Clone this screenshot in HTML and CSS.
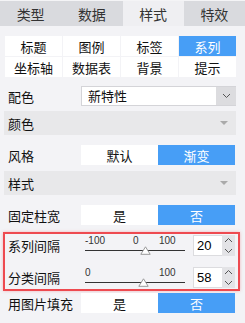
FILE: index.html
```html
<!DOCTYPE html>
<html lang="zh-CN">
<head>
    <meta charset="UTF-8">
    <title>系列样式</title>
    <link rel="stylesheet" href="styles.css">
</head>
<body>
    <div class="tabs">
        <div class="tab">类型</div>
        <div class="tab">数据</div>
        <div class="tab active">样式</div>
        <div class="tab">特效</div>
    </div>

    <div class="panel">
        <div class="sub-tabs">
            <div class="sub">标题</div>
            <div class="sub">图例</div>
            <div class="sub">标签</div>
            <div class="sub active">系列</div>
            <div class="sub">坐标轴</div>
            <div class="sub">数据表</div>
            <div class="sub">背景</div>
            <div class="sub">提示</div>
        </div>

        <div class="row row-color">
            <span class="label">配色</span>
            <div class="select">
                <span class="select-text">新特性</span>
                <span class="select-arrow">
                    <svg width="9" height="6" viewBox="0 0 9 6"><path d="M1 1 L4.5 4.5 L8 1" fill="none" stroke="#555" stroke-width="1"/></svg>
                </span>
            </div>
        </div>

        <div class="bar bar-color">颜色<span class="caret"></span></div>

        <div class="row row-style">
            <span class="label">风格</span>
            <div class="toggle">
                <span class="opt">默认</span>
                <span class="opt on">渐变</span>
            </div>
        </div>

        <div class="bar bar-style">样式<span class="caret"></span></div>

        <div class="row row-fixed">
            <span class="label">固定柱宽</span>
            <div class="toggle">
                <span class="opt">是</span>
                <span class="opt on">否</span>
            </div>
        </div>

        <div class="highlight">
            <div class="slide-row">
                <span class="label">系列间隔</span>
                <div class="slider">
                    <div class="ticks">
                        <span class="t1">-100</span>
                        <span class="t2">0</span>
                        <span class="t3">100</span>
                    </div>
                    <div class="track"></div>
                    <svg class="thumb" style="left: 55px" width="11" height="9" viewBox="0 0 11 9"><path d="M5.5 0.8 L10.2 8.3 L0.8 8.3 Z" fill="#fff" stroke="#999" stroke-width="1"/></svg>
                </div>
                <div class="spin">
                    <span class="num">20</span>
                    <span class="arrows">
                        <svg width="9" height="6" viewBox="0 0 9 6"><path d="M1 5 L4.5 1.5 L8 5" fill="none" stroke="#555"/></svg>
                        <svg width="9" height="6" viewBox="0 0 9 6"><path d="M1 1 L4.5 4.5 L8 1" fill="none" stroke="#555"/></svg>
                    </span>
                </div>
            </div>
            <div class="slide-row">
                <span class="label">分类间隔</span>
                <div class="slider">
                    <div class="ticks">
                        <span class="t0">0</span>
                        <span class="t3">100</span>
                    </div>
                    <div class="track"></div>
                    <svg class="thumb" style="left: 53px" width="11" height="9" viewBox="0 0 11 9"><path d="M5.5 0.8 L10.2 8.3 L0.8 8.3 Z" fill="#fff" stroke="#999" stroke-width="1"/></svg>
                </div>
                <div class="spin">
                    <span class="num">58</span>
                    <span class="arrows">
                        <svg width="9" height="6" viewBox="0 0 9 6"><path d="M1 5 L4.5 1.5 L8 5" fill="none" stroke="#555"/></svg>
                        <svg width="9" height="6" viewBox="0 0 9 6"><path d="M1 1 L4.5 4.5 L8 1" fill="none" stroke="#555"/></svg>
                    </span>
                </div>
            </div>
        </div>

        <div class="row row-image">
            <span class="label">用图片填充</span>
            <div class="toggle">
                <span class="opt">是</span>
                <span class="opt on">否</span>
            </div>
        </div>
    </div>
</body>
</html>
```

FILE: styles.css
```css
body {
    margin: 0;
    background: #f3f3f6;
    font-family: "Noto Sans CJK SC", "Liberation Sans", sans-serif;
    font-size: 13px;
    color: #222;
}
.tabs {
    display: grid;
    grid-template-columns: repeat(4, 1fr);
    height: 25px;
    border-top: 1px solid #f4f4f6;
    background: #d9dade;
}
.tab {
    display: flex;
    align-items: center;
    justify-content: center;
    font-size: 14px;
    color: #333;
}
.tab.active {
    background: #efeff2;
}
.panel {
    padding: 0 9px 0 4px;
}
.sub-tabs {
    display: grid;
    grid-template-columns: repeat(4, 1fr);
    grid-auto-rows: 20px;
    gap: 1px;
    margin: 10px 0 0 1px;
}
.sub {
    display: flex;
    align-items: center;
    justify-content: center;
    background: #fff;
    color: #111;
}
.sub.active {
    background: #479ef6;
    color: #fff;
}
.row {
    display: flex;
    align-items: center;
    height: 20px;
    padding-left: 4px;
}
.label {
    width: 73px;
    flex: none;
    color: #111;
}
.row-color {
    margin-top: 9px;
}
.select {
    display: flex;
    width: 155px;
    height: 20px;
    box-sizing: border-box;
    border: 1px solid #d4d4d8;
    border-right: none;
    background: #fff;
}
.select-text {
    flex: 1;
    padding-left: 6px;
    line-height: 18px;
    color: #111;
}
.select-arrow {
    display: flex;
    align-items: center;
    justify-content: center;
    width: 20px;
    background: #dcdcdf;
}
.bar {
    display: flex;
    align-items: center;
    justify-content: space-between;
    height: 24px;
    padding: 0 8px 0 4px;
    background: #e8e8ea;
    color: #111;
}
.caret {
    width: 0;
    height: 0;
    border-left: 4px solid transparent;
    border-right: 4px solid transparent;
    border-top: 4px solid #aaa;
}
.bar-color {
    margin-top: 5px;
}
.row-style {
    margin-top: 10px;
}
.bar-style {
    margin-top: 6px;
}
.row-fixed {
    margin-top: 10px;
}
.toggle {
    display: flex;
    width: 154px;
    height: 20px;
}
.opt {
    flex: 1;
    display: flex;
    align-items: center;
    justify-content: center;
    background: #fff;
    color: #111;
}
.opt.on {
    background: #479ef6;
    color: #fff;
}
.highlight {
    margin: 7px -4px 0 -1px;
    padding: 1px 0 1px 3px;
    border: 2px solid #ee4a50;
    box-shadow: 0 0 3px rgba(238, 74, 80, 0.35);
}
.slide-row {
    display: flex;
    align-items: center;
    height: 21px;
}
.slide-row + .slide-row {
    margin-top: 11px;
}
.slide-row .label {
    width: 77px;
}
.slider {
    position: relative;
    width: 100px;
    height: 21px;
    margin-right: 8px;
}
.ticks {
    position: relative;
    height: 12px;
    font-family: "Liberation Sans", sans-serif;
    font-size: 10px;
    line-height: 10px;
    color: #333;
}
.ticks span {
    position: absolute;
    top: 1px;
}
.t1 { left: 0; }
.t0 { left: 0; }
.t2 { left: 48px; }
.t3 { left: 74px; }
.track {
    height: 1px;
    margin-top: 3px;
    background: #333;
}
.thumb {
    position: absolute;
    top: 11px;
}
.spin {
    display: flex;
    height: 21px;
}
.num {
    width: 29px;
    box-sizing: border-box;
    border: 1px solid #dcdcdf;
    border-right: none;
    background: #fff;
    padding-left: 3px;
    font-family: "Liberation Sans", sans-serif;
    font-size: 13px;
    line-height: 19px;
    color: #000;
}
.arrows {
    display: flex;
    flex-direction: column;
    align-items: center;
    justify-content: space-around;
    width: 13px;
    background: #e3e3e6;
}
.row-image {
    margin-top: 2px;
}
```
